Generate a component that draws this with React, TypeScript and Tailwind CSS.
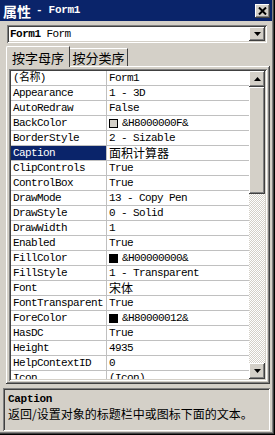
import React from "react";

const MONO = "font-['Liberation_Mono','Noto_Sans_CJK_SC',monospace]";
const CJK = "font-['Noto_Sans_CJK_SC','Liberation_Sans',sans-serif]";

const RAISED =
    "shadow-[inset_-1px_-1px_0_#404040,inset_1px_1px_0_#ffffff,inset_-2px_-2px_0_#808080,inset_2px_2px_0_#d4d0c8]";
const SUNKEN =
    "shadow-[inset_1px_1px_0_#808080,inset_-1px_-1px_0_#ffffff,inset_2px_2px_0_#404040,inset_-2px_-2px_0_#d4d0c8]";

type Row = { name: string; value: string; swatch?: string; cjk?: boolean; selected?: boolean };

const ROWS: Row[] = [
    { name: "(名称)", value: "Form1" },
    { name: "Appearance", value: "1 - 3D" },
    { name: "AutoRedraw", value: "False" },
    { name: "BackColor", value: "&H8000000F&", swatch: "#d4d0c8" },
    { name: "BorderStyle", value: "2 - Sizable" },
    { name: "Caption", value: "面积计算器", cjk: true, selected: true },
    { name: "ClipControls", value: "True" },
    { name: "ControlBox", value: "True" },
    { name: "DrawMode", value: "13 - Copy Pen" },
    { name: "DrawStyle", value: "0 - Solid" },
    { name: "DrawWidth", value: "1" },
    { name: "Enabled", value: "True" },
    { name: "FillColor", value: "&H00000000&", swatch: "#000000" },
    { name: "FillStyle", value: "1 - Transparent" },
    { name: "Font", value: "宋体", cjk: true },
    { name: "FontTransparent", value: "True" },
    { name: "ForeColor", value: "&H80000012&", swatch: "#000000" },
    { name: "HasDC", value: "True" },
    { name: "Height", value: "4935" },
    { name: "HelpContextID", value: "0" },
    { name: "Icon", value: "(Icon)" },
];

const Arrow = ({ up }: { up?: boolean }) => (
    <svg width="7" height="4" viewBox="0 0 7 4">
        <path d={up ? "M3.5 0 L7 4 L0 4 Z" : "M0 0 L7 0 L3.5 4 Z"} fill="#000" />
    </svg>
);

export default function App() {
    return (
        <div className={`w-[275px] h-[435px] bg-[#d4d0c8] flex flex-col overflow-hidden shadow-[inset_-1px_-1px_0_#000000,inset_-2px_-2px_0_#404040,inset_-3px_-3px_0_#808080] ${MONO}`}>
            {/* Title bar */}
            <div className="h-[21px] mr-[3px] bg-[#0a246a] flex items-center justify-between pl-[3px] pr-[2px] shrink-0">
                <div className="flex items-center text-white font-bold">
                    <span className={`${CJK} text-[14px] leading-none`}>属性</span>
                    <span className="text-[11px] tracking-[-0.3px] leading-none ml-[5px]">- Form1</span>
                </div>
                <div className={`w-[15px] h-[14px] bg-[#d4d0c8] flex items-center justify-center ${RAISED}`}>
                    <svg width="9" height="8" viewBox="0 0 9 8">
                        <path d="M1 0.5 L8 7.5 M8 0.5 L1 7.5" stroke="#000" strokeWidth="2" />
                    </svg>
                </div>
            </div>

            {/* Object combo */}
            <div className={`mt-[4px] ml-[7px] mr-[8px] h-[18px] bg-white flex items-center pl-[3px] pr-[2px] ${SUNKEN}`}>
                <span className="text-[11px] tracking-[-0.5px] font-bold">Form1</span>
                <span className="text-[11px] tracking-[-0.6px] ml-[6px] flex-1">Form</span>
                <div className={`w-[16px] h-[14px] bg-[#d4d0c8] flex items-center justify-center ${RAISED}`}>
                    <Arrow />
                </div>
            </div>

            {/* Tabs */}
            <div className="flex items-end ml-[6px] mt-[2px] h-[21px] shrink-0">
                <div className={`h-[21px] w-[64px] bg-[#d4d0c8] border-t border-l border-white border-r-[#404040] border-r flex items-center justify-center relative z-10 -mb-[1px] rounded-tl-[2px] ${CJK} text-[13px] leading-none`}>
                    按字母序
                </div>
                <div className={`h-[18px] w-[58px] border-t border-white border-r border-r-[#404040] flex items-center justify-center ${CJK} text-[13px] leading-none`}>
                    按分类序
                </div>
            </div>

            {/* Tab panel */}
            <div className={`ml-[6px] mr-[5px] h-[318px] p-[3px] ${RAISED} shrink-0`}>
                <div className={`h-full p-[2px] bg-white ${SUNKEN} flex`}>
                    <div className="flex-1 overflow-hidden">
                        {ROWS.map(r => (
                            <div key={r.name} className="flex h-[15px] border-b border-[#c0c0c0]">
                                <div
                                    className={`w-[96px] shrink-0 border-r border-[#c0c0c0] pl-[2px] flex items-center text-[11px] tracking-[-0.6px] leading-none ${r.selected ? "bg-[#0a246a] text-white" : "text-black"}`}
                                >
                                    {r.name}
                                </div>
                                <div className="flex-1 flex items-center pl-[2px] text-[11px] leading-none whitespace-nowrap">
                                    {r.swatch && (
                                        <span
                                            className="w-[9px] h-[9px] border border-black mr-[4px] shrink-0"
                                            style={{ backgroundColor: r.swatch }}
                                        />
                                    )}
                                    <span className={r.cjk ? `${CJK} text-[12px] leading-[14px]` : "tracking-[-0.6px]"}>{r.value}</span>
                                </div>
                            </div>
                        ))}
                    </div>
                    {/* Scrollbar */}
                    <div className="w-[16px] shrink-0 flex flex-col bg-[repeating-conic-gradient(#d4d0c8_0%_25%,#ffffff_0%_50%)] bg-[length:2px_2px]">
                        <div className={`h-[16px] bg-[#d4d0c8] flex items-center justify-center ${RAISED}`}>
                            <Arrow up />
                        </div>
                        <div className={`h-[107px] bg-[#d4d0c8] ${RAISED}`} />
                        <div className="flex-1" />
                        <div className={`h-[16px] bg-[#d4d0c8] flex items-center justify-center ${RAISED}`}>
                            <Arrow />
                        </div>
                    </div>
                </div>
            </div>

            {/* Description */}
            <div className={`mt-[4px] ml-[3px] mr-[5px] h-[43px] px-[5px] pt-[5px] ${SUNKEN}`}>
                <div className="text-[11px] tracking-[-0.3px] font-bold leading-[12px]">Caption</div>
                <div className={`${CJK} text-[12px] leading-[17px] whitespace-nowrap`}>
                    返回/设置对象的标题栏中或图标下面的文本。
                </div>
            </div>
        </div>
    );
}
